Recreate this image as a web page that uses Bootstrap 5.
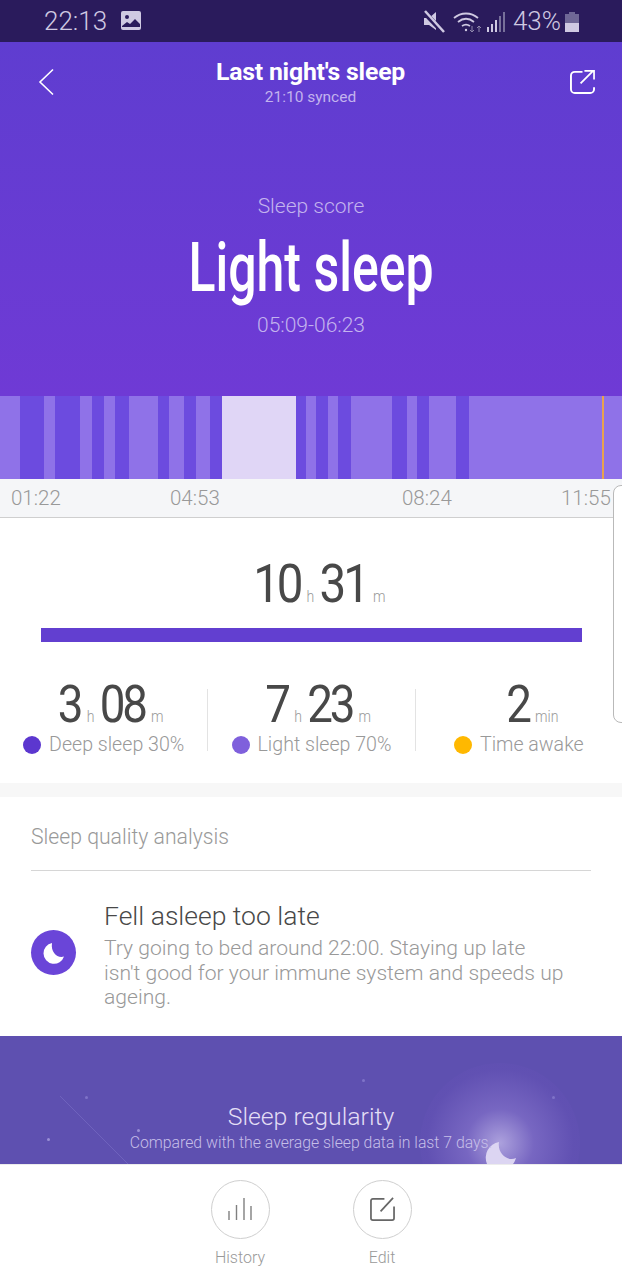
<!DOCTYPE html>
<html lang="en">
<head>
  <meta charset="UTF-8">
  <meta name="viewport" content="width=device-width, initial-scale=1.0">
  <title>Last night's sleep</title>
  <link href="https://cdn.jsdelivr.net/npm/bootstrap@5.3.3/dist/css/bootstrap.min.css" rel="stylesheet">
  <style>
    body {
      width: 622px;
      height: 1280px;
      overflow: hidden;
      background: #fff;
      font-family: Roboto, "Liberation Sans", sans-serif;
      font-weight: 300;
      color: #999;
    }
    .phone { height: 1280px; position: relative; overflow: hidden; }
    .status-bar {
      height: 42px;
      background: #2a1b5c;
      color: #cfc9e2;
      padding: 2px 43px 0 44px;
      font-size: 26px;
      font-weight: 300;
    }
    .status-pic { margin: -3px 0 0 6px; }
    .hero {
      height: 354px;
      background: linear-gradient(180deg, #5f3dd0 0%, #6f3ad5 100%);
      color: #fff;
    }
    .top-bar { height: 82px; padding: 0 27px 0 38px; }
    .back-icon { margin-top: 26px; }
    .share-icon { margin: 27px 0 0 3px; }
    .title-main { font-size: 24.8px; font-weight: 700; line-height: 30px; margin-top: 15px; letter-spacing: -.2px; }
    .title-sub { font-size: 15.5px; line-height: 20px; color: #c3b3ee; font-weight: 400; }
    .score-label { font-size: 21px; color: #c3b3ee; line-height: 26px; margin-top: 69px; }
    .score-value {
      font-size: 69px;
      line-height: 84px;
      font-weight: 500;
      margin-top: 7px;
      transform: scaleX(.725);
    }
    .score-time { font-size: 21px; color: #c3b3ee; line-height: 24px; margin-top: 3px; }
    .stage-chart { height: 83px; background: #8f72e8; position: relative; }
    .stage-chart > div { position: absolute; top: 0; bottom: 0; }
    .stage-deep { background: #6c4bdf; }
    .stage-awake { background: #e0d6f6; }
    .stage-now { background: #e8a24e; }
    .time-axis {
      height: 39px;
      background: #f5f6f8;
      border-bottom: 1px solid #cfcfcf;
      font-size: 20.5px;
      line-height: 39px;
      color: #999;
      position: relative;
    }
    .time-axis span { position: absolute; top: 0; }
    .total-block { height: 266px; padding-top: 39px; }
    .big-num {
      font-weight: 400;
      color: #484848;
      line-height: 1;
      letter-spacing: -3.5px;
      transform: scaleX(.88);
    }
    .total-num { font-size: 54px; padding-left: 25px; }
    .unit { font-weight: 300; color: #999; font-size: 16px; letter-spacing: 0; margin: 0 6px 0 7px; }
    .total-bar { height: 14px; background: #623fd0; margin: 17px 40px 0 41px; }
    .stats-row { margin-top: 47px; }
    .stat-col { height: 62px; }
    .stat-num { font-size: 52px; height: 44px; line-height: 44px; margin-top: -6px; padding-left: 22px; }
    .stat-num-short { padding-left: 36px; }
    .stat-caption { font-size: 19.6px; line-height: 24px; margin-top: 6px; }
    .stat-dot { width: 18px; height: 18px; border-radius: 50%; display: inline-block; }
    .stat-rule { border-left: 1px solid #e3e3e3; }
    .gap-band { height: 14px; background: #f7f7f7; }
    .quality { height: 239px; padding: 0 31px; }
    .quality-head { font-size: 21.2px; line-height: 26px; padding-top: 27px; border-bottom: 1px solid #d6d6d6; height: 74px; }
    .quality-title { font-size: 26.5px; color: #484848; line-height: 30px; margin-top: 30px; }
    .quality-text { font-size: 21.1px; line-height: 24.5px; margin-top: 5px; }
    .moon-badge { width: 45px; height: 45px; border-radius: 50%; background: #6a45d8; flex: none; margin-top: 59px; }
    .regularity {
      height: 128px;
      background: #5e50b0;
      color: #e3def5;
      position: relative;
      overflow: hidden;
    }
    .moon-glow {
      position: absolute;
      left: 420px;
      top: 27px;
      width: 160px;
      height: 160px;
      border-radius: 50%;
      background: radial-gradient(circle, rgba(205,195,240,.7) 0%, rgba(150,130,215,.45) 30%, rgba(110,85,190,.18) 65%, rgba(94,80,176,0) 100%);
    }
    .star { position: absolute; width: 3px; height: 3px; border-radius: 50%; background: #7f73c8; }
    .star-bright { background: #9a8fd6; }
    .reg-title { font-size: 24.8px; line-height: 30px; padding-top: 66px; position: relative; }
    .reg-sub { font-size: 15.8px; line-height: 22px; color: #c6bfe8; position: relative; }
    .bottom-bar {
      height: 116px;
      background: #fff;
      border-top: 1px solid #ececec;
      padding-top: 15px;
      gap: 83px;
    }
    .action-item { width: 59px; text-align: center; font-size: 16px; line-height: 20px; color: #999; }
    .action-label { margin: 0 -10px; }
    .action-circle { width: 59px; height: 59px; border: 1px solid #cfcfcf; border-radius: 50%; margin-bottom: 9px; }
    .edge-handle {
      position: absolute;
      left: 613px;
      top: 485px;
      width: 20px;
      height: 238px;
      border: 1px solid #b9b9b9;
      border-radius: 8px;
      background: #fff;
    }
  </style>
</head>
<body>
  <div class="phone d-flex flex-column">
    <div class="status-bar d-flex align-items-center justify-content-between">
      <div class="d-flex align-items-center gap-2">
        <span>22:13</span>
        <svg width="20" height="19" viewBox="0 0 20 19" class="status-pic"><rect width="20" height="19" rx="2" fill="#cfc9e2"/><circle cx="6" cy="6" r="2" fill="#2a1b5c"/><path d="M1 15l5-4 3 2 5-5 5 5v3H1z" fill="#2a1b5c"/></svg>
      </div>
      <div class="d-flex align-items-center">
        <svg width="22" height="24" viewBox="0 0 22 24"><path d="M1 8h5l7-6v18l-7-5H1z" fill="#cfc9e2"/><path d="M0 1l20 21" stroke="#2a1b5c" stroke-width="5"/><path d="M2 1l19 21" stroke="#cfc9e2" stroke-width="2.500"/></svg>
        <svg width="30" height="24" viewBox="0 0 30 24" class="ms-2" fill="none" stroke="#cfc9e2" stroke-width="1.800"><path d="M1 8c7-6 17-6 24 0"/><path d="M5 12c5-4 11-4 16 0"/><path d="M9 16c3-2 5-2 8 0"/><circle cx="13" cy="20" r="1.200" fill="#cfc9e2" stroke="none"/><path d="M19 16v6m-2-2l2 2 2-2M26 22v-6m-2 2l2-2 2 2" stroke-width="1" stroke="#8f88ab"/></svg>
        <svg width="18" height="24" viewBox="0 0 18 24" class="ms-1"><rect x="0" y="17" width="2" height="5" fill="#cfc9e2"/><rect x="4" y="14" width="2" height="8" fill="#cfc9e2"/><rect x="8" y="10" width="2" height="12" fill="#cfc9e2"/><rect x="12" y="6" width="2" height="16" fill="#77709a"/><rect x="16" y="2" width="2" height="20" fill="#77709a"/></svg>
        <span class="ms-2">43%</span>
        <svg width="14" height="20" viewBox="0 0 14 20" class="ms-1"><path d="M4 0h6v2h4v18H0V2h4z" fill="#6f6796"/><rect y="11" width="14" height="9" fill="#cfc9e2"/></svg>
      </div>
    </div>

    <div class="hero text-center">
      <div class="top-bar d-flex justify-content-between">
        <svg width="16" height="28" viewBox="0 0 16 28" class="back-icon" fill="none" stroke="#fff" stroke-width="1.600"><path d="M15 1.500L2 14l13 12.500"/></svg>
        <div>
          <div class="title-main">Last night's sleep</div>
          <div class="title-sub">21:10 synced</div>
        </div>
        <svg width="25" height="25" viewBox="0 0 26 26" class="share-icon" fill="none" stroke="#fff" stroke-width="2"><path d="M13 3H5a4 4 0 0 0-4 4v14a4 4 0 0 0 4 4h16a4 4 0 0 0 4-4v-2"/><path d="M11 15L24 2M15 2h10v9" stroke-width="1.800"/></svg>
      </div>
      <div class="score-label">Sleep score</div>
      <div class="score-value">Light sleep</div>
      <div class="score-time">05:09-06:23</div>
    </div>

    <div class="stage-chart">
      <div class="stage-deep" style="left:20px;width:24px"></div>
      <div class="stage-deep" style="left:55px;width:25px"></div>
      <div class="stage-deep" style="left:92px;width:12px"></div>
      <div class="stage-deep" style="left:115px;width:14px"></div>
      <div class="stage-deep" style="left:158px;width:11px"></div>
      <div class="stage-deep" style="left:184px;width:12px"></div>
      <div class="stage-deep" style="left:210px;width:12px"></div>
      <div class="stage-awake" style="left:222px;width:74px"></div>
      <div class="stage-deep" style="left:296px;width:10px"></div>
      <div class="stage-deep" style="left:316px;width:12px"></div>
      <div class="stage-deep" style="left:338px;width:13px"></div>
      <div class="stage-deep" style="left:392px;width:15px"></div>
      <div class="stage-deep" style="left:417px;width:12px"></div>
      <div class="stage-deep" style="left:456px;width:13px"></div>
      <div class="stage-now" style="left:602px;width:2px"></div>
    </div>
    <div class="time-axis">
      <span style="left:11px">01:22</span>
      <span style="left:170px">04:53</span>
      <span style="left:402px">08:24</span>
      <span style="left:561px">11:55</span>
    </div>

    <div class="total-block">
      <div class="big-num total-num text-center">10<span class="unit">h</span>31<span class="unit">m</span></div>
      <div class="total-bar"></div>
      <div class="row g-0 stats-row">
        <div class="col-4 stat-col text-center">
          <div class="big-num stat-num">3<span class="unit">h</span>08<span class="unit">m</span></div>
          <div class="stat-caption d-flex align-items-center justify-content-center gap-2"><span class="stat-dot" style="background:#5c37cf"></span>Deep sleep 30%</div>
        </div>
        <div class="col-4 stat-col stat-rule text-center">
          <div class="big-num stat-num">7<span class="unit">h</span>23<span class="unit">m</span></div>
          <div class="stat-caption d-flex align-items-center justify-content-center gap-2"><span class="stat-dot" style="background:#7f60dc"></span>Light sleep 70%</div>
        </div>
        <div class="col-4 stat-col stat-rule text-center">
          <div class="big-num stat-num stat-num-short">2<span class="unit">min</span></div>
          <div class="stat-caption d-flex align-items-center justify-content-center gap-2"><span class="stat-dot" style="background:#ffb800"></span>Time awake</div>
        </div>
      </div>
    </div>

    <div class="gap-band"></div>

    <div class="quality">
      <div class="quality-head">Sleep quality analysis</div>
      <div class="d-flex">
        <div class="moon-badge d-flex align-items-center justify-content-center">
          <svg width="24" height="24" viewBox="0 0 24 24"><path d="M10 2a10.500 10.500 0 1 0 12 13.500c-6.500 2-13.500-4-12-13.500z" fill="#fff"/></svg>
        </div>
        <div class="ms-4 ps-1">
          <div class="quality-title">Fell asleep too late</div>
          <div class="quality-text">Try going to bed around 22:00. Staying up late<br>isn't good for your immune system and speeds up<br>ageing.</div>
        </div>
      </div>
    </div>

    <div class="regularity text-center">
      <div class="moon-glow"></div>
      <svg class="position-absolute top-0 start-0" width="622" height="128" viewBox="0 0 622 128" fill="none"><path d="M60 60l68 68" stroke="#6f62bd" stroke-width="1"/><path d="M499 106a16 16 0 0 0-12 22h26c1-1 2-3 3-6-8 4-19-4-17-16z" fill="#dcd5f2"/></svg>
      <span class="star star-bright" style="left:47px;top:102px"></span>
      <span class="star star-bright" style="left:137px;top:93px"></span>
      <span class="star" style="left:85px;top:60px"></span>
      <span class="star" style="left:362px;top:43px"></span>
      <span class="star" style="left:552px;top:60px"></span>
      <div class="reg-title">Sleep regularity</div>
      <div class="reg-sub">Compared with the average sleep data in last 7 days.</div>
    </div>

    <div class="bottom-bar d-flex justify-content-center">
      <div class="action-item">
        <div class="action-circle d-flex align-items-center justify-content-center">
          <svg width="24" height="23" viewBox="0 0 24 23" fill="none" stroke="#808080" stroke-width="1.400"><path d="M1 13v9M8.500 7v15M16 0v22M23 8v14"/></svg>
        </div>
        <div class="action-label">History</div>
      </div>
      <div class="action-item">
        <div class="action-circle d-flex align-items-center justify-content-center">
          <svg width="25" height="25" viewBox="0 0 26 26" fill="none" stroke="#666" stroke-width="1.800"><path d="M15 2H3a2 2 0 0 0-2 2v18a2 2 0 0 0 2 2h20a2 2 0 0 0 2-2V10"/><path d="M11 15L24 1"/></svg>
        </div>
        <div class="action-label">Edit</div>
      </div>
    </div>

    <div class="edge-handle"></div>
  </div>
  <script src="https://cdn.jsdelivr.net/npm/bootstrap@5.3.3/dist/js/bootstrap.bundle.min.js"></script>
</body>
</html>
